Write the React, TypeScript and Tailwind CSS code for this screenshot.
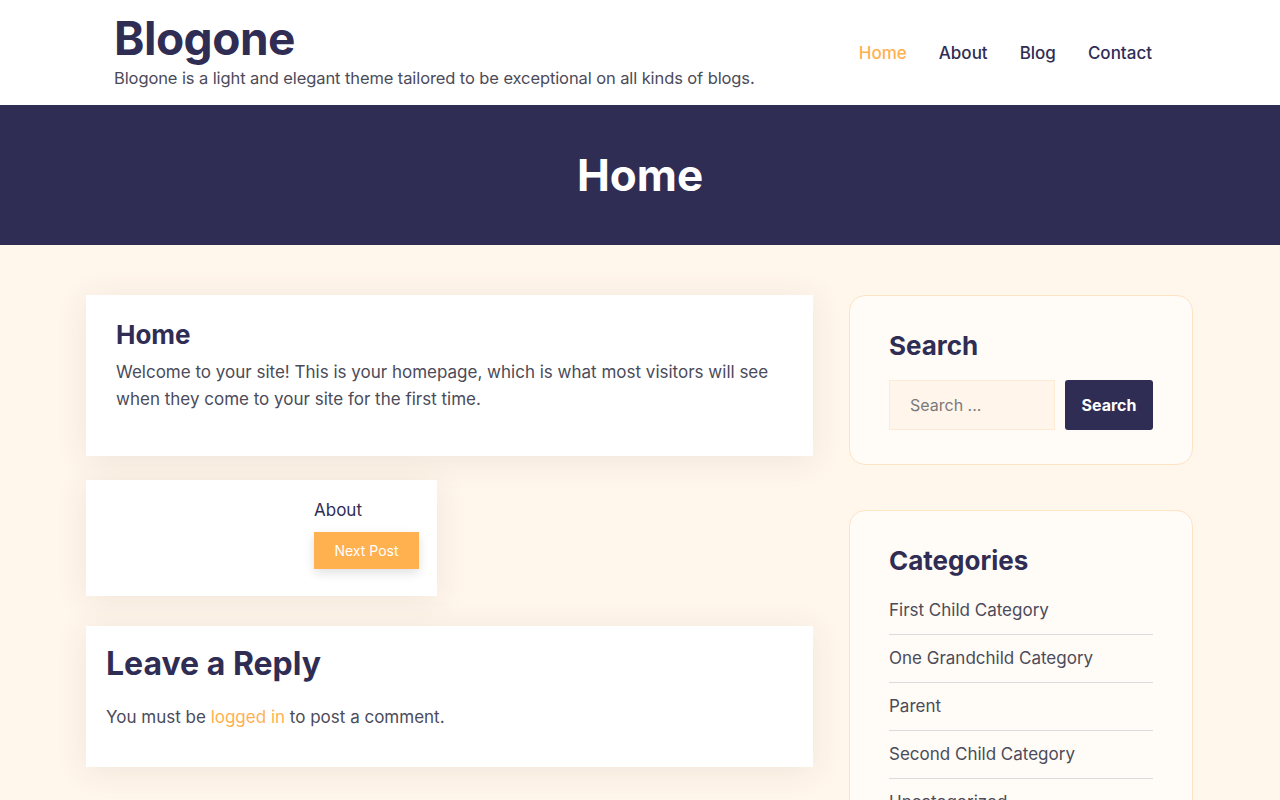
import React from "react";

const NAV = ["Home", "About", "Blog", "Contact"];

const CATEGORIES = [
  "First Child Category",
  "One Grandchild Category",
  "Parent",
  "Second Child Category",
  "Uncategorized",
];

function Header() {
  return (
    <header className="bg-white">
      <div className="flex h-[105px] items-start justify-between px-[114px]">
        <div className="pt-[10px]">
          <h1 className="m-0 text-[46px] font-bold leading-[56px] tracking-[-0.5px] text-[#302d55]">
            Blogone
          </h1>
          <p className="m-0 text-[16.5px] leading-[24px] tracking-[-0.1px] text-[#4b4b5a]">
            Blogone is a light and elegant theme tailored to be exceptional on all kinds of blogs.
          </p>
        </div>
        <nav className="mr-[14px] flex gap-[32px] pt-[41px]">
          {NAV.map((item, idx) => (
            <a
              key={item}
              href="#"
              className={`text-[17px] font-medium leading-[24px] ${
                idx === 0 ? "text-[#ffb14f]" : "text-[#302d55]"
              }`}
            >
              {item}
            </a>
          ))}
        </nav>
      </div>
    </header>
  );
}

function Hero() {
  return (
    <section className="flex h-[140px] items-center justify-center bg-[#302d55]">
      <h2 className="m-0 text-[44px] font-bold leading-none text-white">Home</h2>
    </section>
  );
}

function Card({ className = "", children }: { className?: string; children: React.ReactNode }) {
  return (
    <article className={`bg-white shadow-[0_4px_30px_rgba(120,80,40,0.10)] ${className}`}>
      {children}
    </article>
  );
}

function SidebarCard({ title, children }: { title: string; children: React.ReactNode }) {
  return (
    <div className="rounded-[16px] border border-[#fde4c4] bg-[#fffbf6] px-[39px] pb-[34px] pt-[32px]">
      <h3 className="m-0 text-[26px] font-bold leading-[36px] text-[#302d55]">{title}</h3>
      {children}
    </div>
  );
}

export default function App() {
  return (
    <div
      className="min-h-screen bg-[#fff6ec]"
      style={{ fontFamily: "Inter, 'Noto Sans', sans-serif" }}
    >
      <Header />
      <Hero />

      <main className="grid grid-cols-[727px_344px] gap-[36px] px-[86px] pb-[60px] pt-[50px]">
        {/* Colonne principale */}
        <div className="flex flex-col">
          <Card className="px-[30px] pb-[43px] pt-[22px]">
            <h2 className="m-0 text-[26px] font-bold leading-[36px] text-[#302d55]">Home</h2>
            <p className="m-0 mt-[6px] text-[17px] leading-[27px] text-[#4b4b5a]">
              Welcome to your site! This is your homepage, which is what most visitors will see
              when they come to your site for the first time.
            </p>
          </Card>

          <Card className="mt-[24px] flex h-[116px] w-[351px] justify-end pr-[18px] pt-[18px]">
            <div className="w-[105px]">
              <a href="#" className="block text-[17px] leading-[24px] text-[#302d55]">
                About
              </a>
              <button
                type="button"
                className="mt-[10px] h-[37px] w-[105px] bg-[#ffb14f] text-[14px] text-white shadow-[0_4px_10px_rgba(0,0,0,0.12)]"
              >
                Next Post
              </button>
            </div>
          </Card>

          <Card className="mt-[30px] h-[141px] px-[20px] pt-[18px]">
            <h2 className="m-0 text-[32px] font-bold leading-[40px] text-[#302d55]">
              Leave a Reply
            </h2>
            <p className="m-0 mt-[20px] text-[17px] leading-[26px] text-[#4b4b5a]">
              You must be{" "}
              <a href="#" className="text-[#ffb14f]">
                logged in
              </a>{" "}
              to post a comment.
            </p>
          </Card>
        </div>

        {/* Barre latérale */}
        <aside className="flex flex-col gap-[45px]">
          <SidebarCard title="Search">
            <form className="mt-[16px] flex gap-[10px]" onSubmit={(e) => e.preventDefault()}>
              <input
                type="text"
                placeholder="Search ..."
                className="h-[50px] w-[166px] border border-[#fdebd6] bg-[#fff5eb] px-[20px] text-[16px] text-[#4b4b5a] outline-none placeholder:text-[#7a7a7a]"
              />
              <button
                type="submit"
                className="h-[50px] w-[88px] rounded-[3px] bg-[#302d55] text-[16px] font-bold text-white"
              >
                Search
              </button>
            </form>
          </SidebarCard>

          <SidebarCard title="Categories">
            <ul className="m-0 mt-[8px] list-none p-0">
              {CATEGORIES.map((cat, idx) => (
                <li
                  key={cat}
                  className={`py-[12px] leading-[23px] ${idx < CATEGORIES.length - 1 ? "border-b border-[#dcdbe0]" : ""}`}
                >
                  <a href="#" className="text-[17px] leading-[23px] text-[#4b4b5a]">
                    {cat}
                  </a>
                </li>
              ))}
            </ul>
          </SidebarCard>
        </aside>
      </main>
    </div>
  );
}
